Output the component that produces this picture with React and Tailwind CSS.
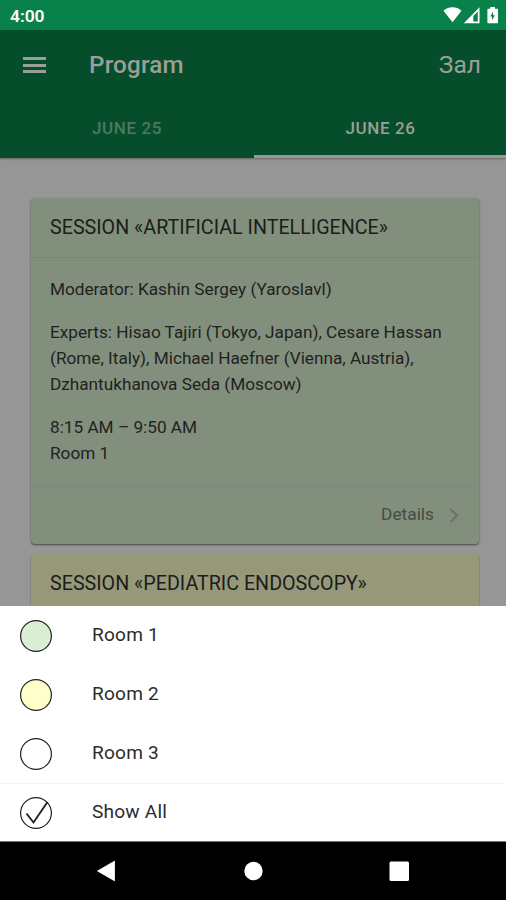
import React, { useState } from 'react'

const days = ['JUNE 25', 'JUNE 26']

const rooms = [
  { name: 'Room 1', color: 'fill-[#d9eed3]' },
  { name: 'Room 2', color: 'fill-[#feffcb]' },
  { name: 'Room 3', color: 'fill-white' },
]

function StatusBar() {
  return (
    <div className="h-[30px] shrink-0 bg-[#08824a] flex items-center justify-between pl-[10px] pr-[7px] text-white">
      <span className="text-[17.4px] leading-[30px] pt-[2px] font-semibold">4:00</span>
      <svg width="56" height="18" viewBox="0 0 56 18" fill="currentColor">
        <path d="M0.5 4.8C5.5 0.2 13.5 0.2 18.5 4.8L9.5 16.3Z" />
        <path fillRule="evenodd" d="M36.5 1.2V17.2H20.8ZM34.8 5.4L30.3 10V15.6H34.8Z" />
        <path fillRule="evenodd" d="M47.3 1h4.6v1.8h2.1c.6 0 1 .4 1 1V16.300c0 .6-.4 1-1 1h-8.600c-.6 0-1-.4-1-1V3.800c0-.6.4-1 1-1h1.900zM50.100 5.500l-2.800 5h1.700v3.800l2.800-5h-1.700z" />
      </svg>
    </div>
  )
}

function Header({ day, onDay }) {
  return (
    <header className="h-[128px] shrink-0 bg-[#064d2b] text-[#9c9f99] shadow-[0_1px_2px_#00000055] relative">
      <div className="h-[70px] flex items-center pl-[23px] pr-[25px]">
        <button className="w-[23px] h-4 flex flex-col justify-between">
          <span className="w-full h-[3px] bg-current" />
          <span className="w-full h-[3px] bg-current" />
          <span className="w-full h-[3px] bg-current" />
        </button>
        <h1 className="ml-[43px] text-[24.2px] leading-[30px] font-medium tracking-[0.2px]">Program</h1>
        <span className="ml-auto text-[24.6px] leading-[30px]">Зал</span>
      </div>
      <div className="h-[58px] grid grid-cols-[254px_252px]">
        {days.map(d => (
          <button key={d} onClick={() => onDay(d)} className={`text-[17px] font-medium tracking-[0.6px] border-b-[3px] pt-[2px] ${day === d ? 'pl-px border-[#989898] text-[#9c9f99]' : 'border-transparent text-[#4b7a60]'}`}>{d}</button>
        ))}
      </div>
    </header>
  )
}

function SessionTitle({ children }) {
  return <h2 className="h-[59px] pl-[19px] text-[19.7px] leading-[60px] text-[#1a1d19]">{children}</h2>
}

function Rooms() {
  return (
    <div className="h-[236px] shrink-0 bg-white border-b border-[#777] text-[#2c2c2c] text-[19.1px] relative">
      {rooms.map(room => (
        <button key={room.name} className="w-full h-[59px] flex items-center pl-5">
          <svg width="32" height="34" viewBox="0 0 32 34">
            <circle cx="16" cy="17" r="15.400" strokeWidth="1.200" className={`stroke-[#222] ${room.color}`} />
          </svg>
          <span className="ml-10 tracking-[0.2px]">{room.name}</span>
        </button>
      ))}
      <button className="w-full h-[58px] flex items-center pl-5 border-t border-[#f3f3f3]">
        <svg width="32" height="34" viewBox="0 0 32 34" fill="none" stroke="#222">
          <circle cx="16" cy="17" r="15.400" strokeWidth="1.200" />
          <path d="M6.500 17.500L13.500 26.500L27.500 6" strokeWidth="1.900" />
        </svg>
        <span className="ml-10 tracking-[0.2px]">Show All</span>
      </button>
    </div>
  )
}

export default function App() {
  const [day, setDay] = useState('JUNE 26')

  return (
    <div className="w-[506px] h-[900px] overflow-hidden flex flex-col bg-[#969696] font-[Roboto,sans-serif]">
      <StatusBar />
      <Header day={day} onDay={setDay} />

      <main className="flex-1 min-h-0 overflow-hidden pt-[40px] pl-[31px] pr-[27px] flex flex-col gap-[10px]">
        <article className="h-[346px] shrink-0 bg-[#828f7d] rounded-[4px] shadow-[0_1px_2px_#00000088] flex flex-col">
          <SessionTitle>SESSION «ARTIFICIAL INTELLIGENCE»</SessionTitle>
          <div className="h-[230px] border-y border-t-[#7b8776] border-b-[#7e8a79] pl-[19px] pt-[17.5px] text-[17.2px] leading-[26px] text-[#1f221e] flex flex-col gap-[17px]">
            <p>Moderator: Kashin Sergey (Yaroslavl)</p>
            <p>
              Experts: Hisao Tajiri (Tokyo, Japan), Cesare Hassan<br />
              (Rome, Italy), Michael Haefner (Vienna, Austria),<br />
              Dzhantukhanova Seda (Moscow)
            </p>
            <p>8:15 AM – 9:50 AM<br />Room 1</p>
          </div>
          <button className="flex-1 flex items-center justify-end pr-[19px] pb-[2px] text-[17.3px] text-[#454d43]">
            Details
            <svg className="ml-[14px]" width="12" height="18" viewBox="0 0 12 18" fill="none" stroke="#687073" strokeWidth="2">
              <path d="M2.500 3L9 9.500L2.500 16" />
            </svg>
          </button>
        </article>

        <article className="h-[346px] shrink-0 bg-[#97987a] rounded-[4px] shadow-[0_1px_2px_#00000066]">
          <SessionTitle>SESSION «PEDIATRIC ENDOSCOPY»</SessionTitle>
        </article>
      </main>

      <Rooms />

      <nav className="h-[58px] shrink-0 bg-black">
        <svg width="506" height="58" viewBox="0 0 506 58" fill="white">
          <path d="M97.500 29L114.500 19.200V38.800Z" strokeLinejoin="round" stroke="white" strokeWidth="0.800" />
          <circle cx="253.500" cy="29" r="9.200" />
          <rect x="389.500" y="19.500" width="19.500" height="19.500" rx="1.500" />
        </svg>
      </nav>
    </div>
  )
}
